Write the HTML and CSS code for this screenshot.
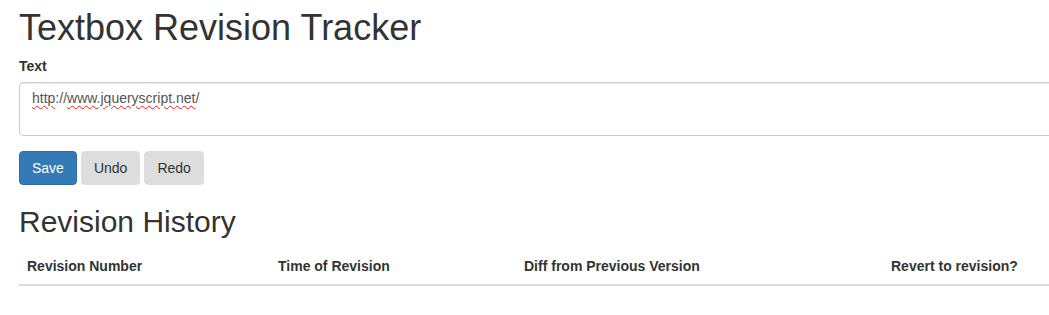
FILE: index.html
```html
<!DOCTYPE html>
<html lang="en">
<head>
    <meta charset="UTF-8">
    <meta name="viewport" content="width=device-width, initial-scale=1.0">
    <title>Textbox Revision Tracker</title>
    <link rel="stylesheet" href="styles.css">
</head>
<body>
    <div class="container">
        <h1>Textbox Revision Tracker</h1>

        <div class="form-group">
            <label for="text-input">Text</label>
            <div class="form-control" id="text-input" contenteditable="true" spellcheck="false"><span class="misspelled">http</span>://<span class="misspelled">www.jqueryscript.net</span>/</div>
        </div>

        <div class="buttons">
            <button class="btn btn-primary" id="save-btn">Save</button>
            <button class="btn btn-default" id="undo-btn">Undo</button>
            <button class="btn btn-default" id="redo-btn">Redo</button>
        </div>

        <h2>Revision History</h2>
        <table class="table">
            <thead>
                <tr>
                    <th class="col-num">Revision Number</th>
                    <th class="col-time">Time of Revision</th>
                    <th class="col-diff">Diff from Previous Version</th>
                    <th>Revert to revision?</th>
                </tr>
            </thead>
            <tbody id="history"></tbody>
        </table>
    </div>
</body>
</html>
```

FILE: styles.css
```css
html, body {
    margin: 0;
    overflow: hidden;
}
body {
    font-family: "Liberation Sans", Arial, sans-serif;
    font-size: 14px;
    line-height: 1.42857;
    color: #333;
    background-color: #fff;
}
.container {
    width: 1140px;
    padding-left: 19px;
}
h1 {
    font-size: 36px;
    font-weight: 500;
    line-height: 1.1;
    margin: 8px 0 9px;
}
h2 {
    font-size: 30px;
    font-weight: 500;
    line-height: 1.1;
    margin: 20px 0 10px;
}
.form-group {
    margin-bottom: 15px;
}
label {
    display: inline-block;
    font-weight: bold;
    margin-bottom: 5px;
}
.form-control {
    display: block;
    box-sizing: border-box;
    width: 100%;
    height: 54px;
    padding: 6px 12px;
    border: 1px solid #ccc;
    border-radius: 4px;
    box-shadow: inset 0 1px 1px rgba(0,0,0,0.075);
    color: #555;
    outline: none;
}
.misspelled {
    text-decoration: underline wavy #e02020;
    text-decoration-thickness: 1px;
    text-underline-offset: 2px;
}
.buttons {
    font-size: 0;
}
.btn {
    display: inline-block;
    padding: 6px 12px;
    margin-right: 4px;
    font-family: inherit;
    font-size: 14px;
    line-height: 20px;
    border: 1px solid transparent;
    border-radius: 4px;
    cursor: pointer;
}
.btn-primary {
    color: #fff;
    background-color: #337ab7;
    border-color: #2e6da4;
}
.btn-default {
    color: #333;
    background-color: #ddd;
    border-color: #ddd;
}
.table {
    width: 100%;
    border-collapse: collapse;
    border-spacing: 0;
}
.table th {
    text-align: left;
    padding: 8px;
    line-height: 20px;
    border-bottom: 2px solid #ddd;
}
.col-num {
    width: 235px;
}
.col-time {
    width: 230px;
}
.col-diff {
    width: 351px;
}
```
